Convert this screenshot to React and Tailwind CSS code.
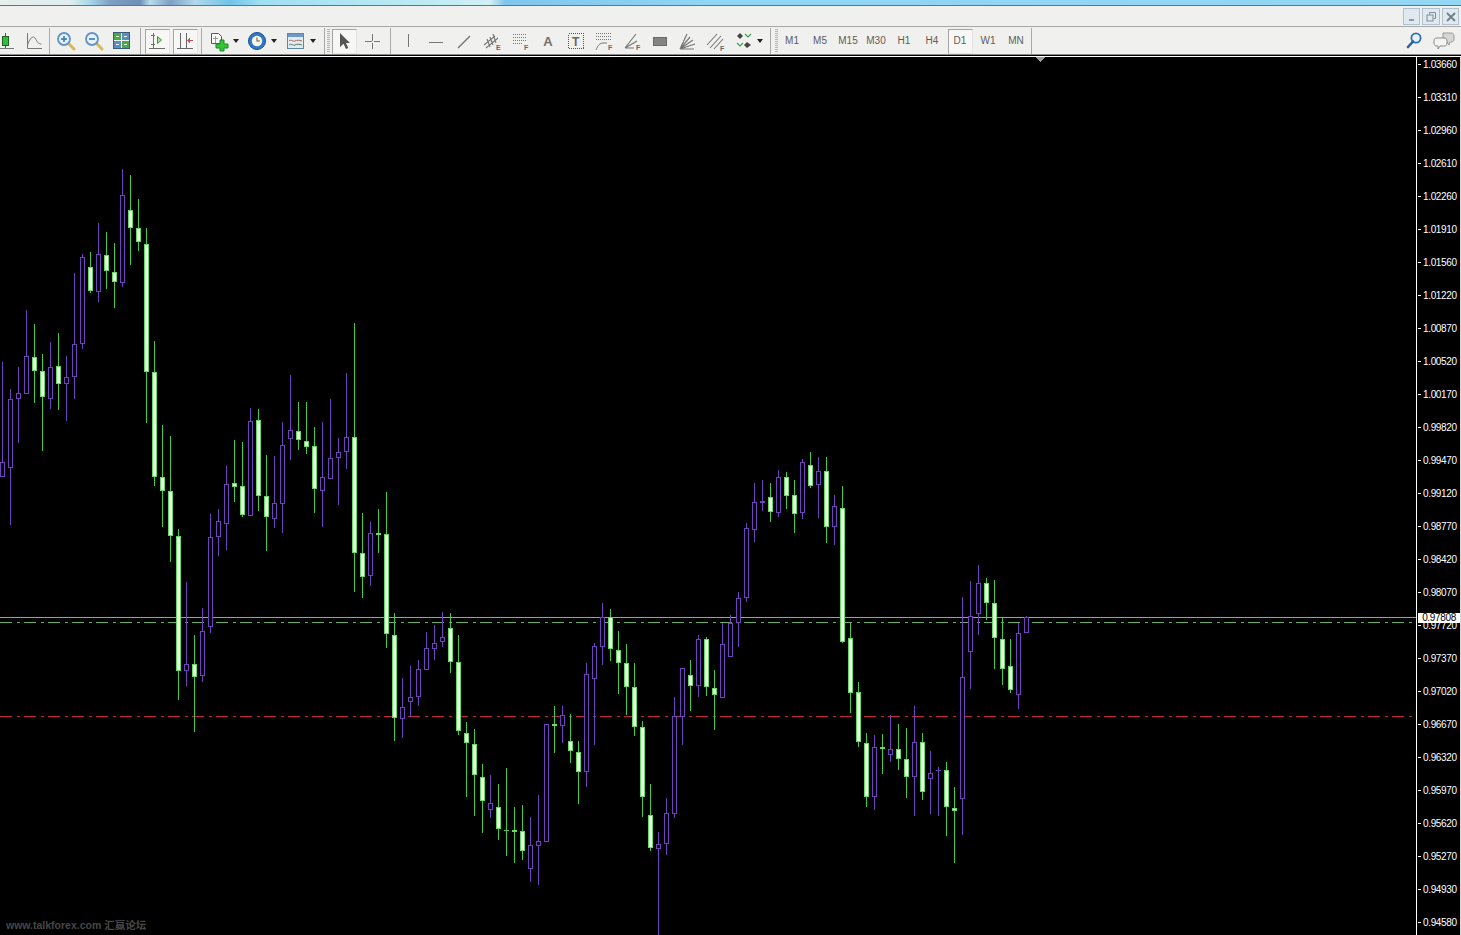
import React from "react";

const D = `P,362,462,477,477;P,389,399,468,525;P,367,393,399,443;P,310,356,394,394;G,324,357,371,403;G,354,371,397,451;P,342,367,399,409;G,333,366,384,410;P,356,377,384,421;P,273,344,377,399;P,254,257,344,349;G,252,267,291,293;P,223,254,292,302;G,232,255,271,289;G,243,272,282,308;P,169,195,283,287;G,175,210,228,265;G,199,228,242,251;G,228,244,372,423;G,341,372,477,486;G,425,477,491,527;G,436,491,536,562;G,529,536,671,700;P,582,664,671,686;G,635,664,677,732;P,608,631,676,682;P,514,537,627,633;P,509,521,537,556;P,466,484,524,550;G,440,483,487,502;G,442,486,515,517;P,408,421,516,516;G,409,420,496,511;G,455,496,517,551;P,456,503,519,528;P,422,445,504,533;P,375,430,439,460;G,402,431,440,450;G,402,441,447,454;G,427,446,489,513;P,422,477,491,527;P,399,458,479,479;P,438,452,458,505;P,373,437,452,469;G,323,437,553,592;G,513,553,577,598;P,522,533,576,586;G,509,533,535,553;G,492,534,634,648;G,613,635,718,741;P,678,707,719,738;P,666,697,702,717;P,660,669,697,706;P,632,648,670,670;P,625,643,649,660;P,612,637,642,647;G,613,628,662,673;G,635,662,731,735;G,722,733,743,797;G,729,744,775,816;G,764,777,801,833;P,775,803,810,818;G,784,807,829,840;T,768,830,831,856;G,807,830,832,863;G,805,831,851,860;P,817,845,869,882;P,795,841,846,885;P,724,724,842,842;G,706,724,726,753;P,706,715,726,743;G,714,741,751,763;G,741,752,772,804;P,663,674,772,787;P,643,646,679,745;P,603,617,647,665;G,609,617,649,661;G,631,650,663,694;G,644,663,687,715;G,663,687,727,736;G,721,727,797,817;G,784,815,848,851;P,832,844,849,935;P,798,813,844,855;P,697,716,814,818;P,668,668,717,745;G,660,675,686,711;P,635,639,686,697;G,637,639,687,696;G,670,688,695,730;P,623,644,698,698;P,615,623,657,657;P,592,598,623,647;P,523,528,598,602;P,483,502,530,542;P,480,501,503,511;G,483,497,512,522;P,470,477,513,517;G,472,477,496,509;G,480,495,514,533;P,459,462,513,519;G,452,465,486,488;P,457,471,485,518;G,457,471,527,543;P,495,506,527,545;G,486,508,642,643;G,623,638,693,713;G,682,692,742,747;G,733,743,797,807;P,735,747,797,810;G,734,747,749,774;P,715,749,755,762;G,724,749,759,770;G,728,759,777,798;P,706,742,777,816;G,733,742,792,800;P,751,773,779,814;Q,767,769,771,816;G,762,770,807,836;G,787,808,811,863;P,597,677,799,835;P,581,616,652,689;P,565,583,614,635;G,578,583,603,620;G,580,603,638,669;G,618,639,669,685;G,639,666,690,693;P,623,633,695,709;P,616,617,633,633`
  .split(";")
  .map((r) => r.split(","));

const LABELS = ["1.03660","1.03310","1.02960","1.02610","1.02260","1.01910","1.01560","1.01220","1.00870","1.00520","1.00170","0.99820","0.99470","0.99120","0.98770","0.98420","0.98070","0.97720","0.97370","0.97020","0.96670","0.96320","0.95970","0.95620","0.95270","0.94930","0.94580"];

const PURPLE = "#7040bd";
const GREEN = "#45c945";

function Candle({ row, i }) {
  const [t, h, a, b, l] = row;
  const high = +h, top = +a, bot = +b, low = +l;
  const x = 2 + i * 8;
  const purple = t === "P" || t === "Q";
  const color = purple ? PURPLE : GREEN;
  const wick = <rect x={x} y={high} width="1" height={low - high} fill={color} />;
  if (t === "T") {
    return <g>{wick}<rect x={x - 2} y={top} width="5" height="1" fill={color} /></g>;
  }
  if (t === "Q") {
    return <g>{wick}<rect x={x - 2} y={top + 1} width="5" height="1" fill={color} /></g>;
  }
  return (
    <g>
      {wick}
      <rect x={x - 2} y={top} width="5" height={Math.max(bot - top, 2)} fill={purple ? PURPLE : "#62dd62"} />
      {bot - top > 2 && (
        <rect x={x - 1} y={top + 1} width="3" height={bot - top - 2} fill={purple ? "#000000" : "#eaffe2"} />
      )}
    </g>
  );
}

function Chart() {
  return (
    <div className="relative flex-1 min-w-0 bg-black overflow-hidden">
      <svg viewBox="0 57 1416 878" className="block w-[1416px] h-[878px]" shapeRendering="crispEdges">
        <rect x="0" y="617" width="1416" height="1" fill="#9d9ab8" />
        <line x1="0" x2="1416" y1="622.5" y2="622.5" stroke="#62b062" strokeDasharray="12 5 3 4" />
        <line x1="0" x2="1416" y1="716.5" y2="716.5" stroke="#c4263a" strokeDasharray="12 5 3 4" />
        {D.map((r, i) => <Candle key={i} row={r} i={i} />)}
        <polygon points="1035,57 1045,57 1040,62" fill="#9a9a9a" />
      </svg>
      <div className="absolute left-[6px] bottom-[3px] text-[10.5px] font-bold leading-[14px] text-[#474747] whitespace-nowrap font-['Liberation_Sans','Noto_Sans_CJK_SC',sans-serif]">
        www.talkforex.com 汇赢论坛
      </div>
    </div>
  );
}

function Axis() {
  return (
    <div className="relative w-[45px] h-[878px] border-l border-r border-l-white border-r-[#d8d8d8] bg-black overflow-hidden">
      <div className="-mt-[9px] flex flex-col">
        {LABELS.map((s) => (
          <div key={s} className="h-[33px] shrink-0 flex items-center gap-[2px] pl-px">
            <span className="block w-[3px] h-px bg-white" />
            <span className="text-[10px] tracking-[-0.35px] leading-none text-white font-['Liberation_Sans',sans-serif]">{s}</span>
          </div>
        ))}
      </div>
      <div className="absolute left-px top-[556px] w-[42px] h-[10px] bg-white flex items-center justify-center text-[10px] tracking-[-0.35px] leading-none text-black font-['Liberation_Sans',sans-serif]">
        0.97808
      </div>
    </div>
  );
}

const S = ({ children }) => (
  <svg width="22" height="22" viewBox="0 0 22 22" fill="none" className="block">{children}</svg>
);
const Btn = ({ children, pressed, className = "w-7" }) => (
  <div className={`${className} h-[26px] shrink-0 flex items-center justify-center`}>
    {pressed ? (
      <div className="w-[25px] h-[25px] flex items-center justify-center border border-t-[#a4a4a4] border-l-[#a4a4a4] border-r-[#e4e4e4] border-b-[#e4e4e4] bg-[#f7f7f6]">
        {children}
      </div>
    ) : children}
  </div>
);
const Sep = ({ className = "" }) => <div className={`w-px h-[26px] shrink-0 bg-[#a8a8a8] ${className}`} />;
const Grip = ({ className = "" }) => (
  <div className={`w-[3px] h-[23px] mb-[2px] shrink-0 flex flex-col justify-between ${className}`}>
    {Array.from({ length: 12 }).map((_, i) => <span key={i} className="block h-px bg-[#b4b4b4]" />)}
  </div>
);
const Caret = ({ className }) => (
  <div className={`${className} h-[26px] shrink-0 flex items-center justify-center`}>
    <span className="block shrink-0 border-t-[4px] border-x-[3.5px] border-t-[#222] border-x-transparent" />
  </div>
);
const G = "#777777";
const Letter = ({ c, x = 15, y = 20 }) => (
  <text x={x} y={y} fontSize="7" fontWeight="700" fill="#666" fontFamily="Liberation Sans, sans-serif">{c}</text>
);
const Tf = ({ t, pressed }) => (
  <Btn pressed={pressed}>
    <span className="text-[10px] leading-none text-[#5c5c5c] font-['Liberation_Sans',sans-serif]">{t}</span>
  </Btn>
);

const Magnifier = ({ plus }) => (
  <S>
    <line x1="13" y1="13" x2="19" y2="19" stroke="#d9b75a" strokeWidth="3" strokeLinecap="round" />
    <circle cx="9" cy="9" r="6" fill="#e6f1fa" stroke="#5f94c6" strokeWidth="1.8" />
    <rect x="6" y="8.2" width="6" height="1.6" fill="#3c79b4" />
    {plus && <rect x="8.2" y="6" width="1.6" height="6" fill="#3c79b4" />}
  </S>
);

function Toolbar() {
  return (
    <div className="h-[27px] bg-[#f0f0ee] border-b border-[#8c8c8c] flex items-end overflow-hidden font-['Liberation_Sans',sans-serif] box-content">
      <Btn className="w-[29px] -ml-[10px]">
        <S>
          <path d="M4.5 2v16.5H20" stroke={G} />
          <path d="M11.5 3v15" stroke="#2b6b2b" />
          <rect x="8.5" y="6.5" width="6" height="9" fill="#2fbf3a" stroke="#1f5f24" />
        </S>
      </Btn>
      <Btn>
        <S>
          <path d="M5.5 3v15.5H20" stroke={G} />
          <path d="M5.5 15c2-6 4-8 6-8s3 5 5 6 2 1 3 1" stroke={G} />
        </S>
      </Btn>
      <Sep className="ml-[2px] mr-[2px]" />
      <Btn><Magnifier plus /></Btn>
      <Btn><Magnifier /></Btn>
      <Btn>
        <S>
          <rect x="2.5" y="2.5" width="16" height="16" fill="#eef4f8" stroke="#3a5a7a" />
          <rect x="3" y="3" width="7" height="7" fill="#47a947" />
          <rect x="11" y="3" width="7" height="7" fill="#5b8fc4" />
          <rect x="3" y="11" width="7" height="7" fill="#5b8fc4" />
          <rect x="11" y="11" width="7" height="7" fill="#47a947" />
          <rect x="5" y="6" width="3" height="1" fill="#fff" />
          <rect x="13" y="6" width="3" height="1" fill="#fff" />
          <rect x="5" y="14" width="3" height="1" fill="#fff" />
          <rect x="13" y="14" width="3" height="1" fill="#fff" />
        </S>
      </Btn>
      <Sep className="ml-[4px] mr-[2px]" />
      <Btn pressed>
        <S>
          <path d="M7.5 3v15M3 18.5h16" stroke="#6a6f6a" />
          <path d="M5 5.5h4M5 14.5h4" stroke="#6a6f6a" />
          <path d="M11.5 6.5l4 3.5-4 3.5z" fill="#a8dc9c" stroke="#3f9a3f" />
        </S>
      </Btn>
      <Btn pressed>
        <S>
          <path d="M6.5 3v15M12.5 3v15M3 18.5h16" stroke="#666" />
          <path d="M19 10.5h-5" stroke="#c44f4f" />
          <path d="M13 10.5l3-3v6z" fill="#c44f4f" />
        </S>
      </Btn>
      <Sep className="ml-[2px] mr-[3px]" />
      <Btn>
        <S>
          <path d="M3.5 3.5h7l3 3v7h-10z" fill="#fafafa" stroke="#5a5a5a" />
          <path d="M7.5 6v7M5 8.5h5" stroke="#9a9a9a" />
          <path d="M12 10h4v4h4v4h-4v3h-4v-3H8v-4h4z" fill="#35c435" stroke="#1f8a2a" />
        </S>
      </Btn>
      <Caret className="w-[5px]" />
      <div className="w-[5px] shrink-0" />
      <Btn>
        <S>
          <circle cx="11" cy="11" r="8.5" fill="#2f79c8" stroke="#1c4f8f" />
          <circle cx="11" cy="11" r="5.2" fill="#f7f4e8" />
          <path d="M11 7.5V11h3" stroke="#7a5a2a" strokeWidth="1.1" />
        </S>
      </Btn>
      <Caret className="w-[6px]" />
      <div className="w-[5px] shrink-0" />
      <Btn>
        <S>
          <rect x="2.5" y="3.5" width="16" height="15" fill="#dfeaf2" stroke="#5f86a8" />
          <rect x="3" y="4" width="15" height="3" fill="#6d9ac4" />
          <path d="M4 11c2-2 4 1 6 0s4-1 7 0" stroke="#a86a55" />
          <path d="M4 15c2-2 4 1 6 0s4-1 7 0" stroke="#5a7a5a" />
        </S>
      </Btn>
      <Caret className="w-[6px]" />
      <Sep className="ml-[8px]" />
      <Grip className="ml-[2px]" />
      <Btn pressed>
        <S>
          <path d="M7 3v14l3.5-3.2L13 19l2.4-1.1-2.5-5H17z" fill="#555" />
        </S>
      </Btn>
      <Btn>
        <S>
          <path d="M11.5 4v7M11.5 13v6M4 11.5h6.5M12.5 11.5H19" stroke="#777" shapeRendering="crispEdges" />
        </S>
      </Btn>
      <Sep className="ml-[4px] mr-[3px]" />
      <Btn><S><path d="M11.5 4v13" stroke={G} shapeRendering="crispEdges" /></S></Btn>
      <Btn><S><path d="M4 12.5h14" stroke={G} shapeRendering="crispEdges" /></S></Btn>
      <Btn><S><path d="M5 18L17 6" stroke={G} strokeWidth="1.4" /></S></Btn>
      <Btn>
        <S>
          <path d="M3 15L14 6M5 18L17 8M6 9l3 8M9 7l3 8M12 4l3 9" stroke={G} strokeWidth="1.1" />
          <Letter c="E" />
        </S>
      </Btn>
      <Btn>
        <S>
          <path d="M4 4.5h14M4 7.5h14M4 10.5h14M4 13.5h10" stroke={G} strokeDasharray="1 1" shapeRendering="crispEdges" />
          <Letter c="F" />
        </S>
      </Btn>
      <Btn>
        <span className="text-[13px] leading-none text-[#707070] font-bold">A</span>
      </Btn>
      <Btn>
        <S>
          <rect x="3.5" y="3.5" width="15" height="15" stroke="#555" strokeDasharray="1 1" shapeRendering="crispEdges" />
          <text x="7" y="16" fontSize="12" fontWeight="700" fill="#666" fontFamily="Liberation Sans, sans-serif">T</text>
        </S>
      </Btn>
      <Btn>
        <S>
          <path d="M3 3.5h16M3 6.5h16M3 9.5h16" stroke={G} strokeDasharray="1 1" shapeRendering="crispEdges" />
          <path d="M3 20c2-5 4-7 7-7h4" stroke={G} />
          <Letter c="F" />
        </S>
      </Btn>
      <Btn>
        <S>
          <path d="M4 18L15 4M4 18l12-7M4 18h9" stroke={G} strokeWidth="1.2" />
          <Letter c="F" />
        </S>
      </Btn>
      <Btn>
        <S><rect x="4.5" y="7.5" width="13" height="8" fill="#848484" stroke="#6a6a6a" /></S>
      </Btn>
      <Btn>
        <S><path d="M3 19L10 4M3 19l10-12M3 19l13-9M3 19l15-5M3 19h14" stroke={G} strokeWidth="1.2" /></S>
      </Btn>
      <Btn>
        <S>
          <path d="M2 15L12 4M5 18L16 6M9 19L18 9" stroke={G} strokeWidth="1.1" />
          <Letter c="F" x="15" y="21" />
        </S>
      </Btn>
      <Btn>
        <S>
          <path d="M7 3l3 3-3 3-3-3z" fill="#444" />
          <path d="M14 12l4 3-4 3-3-3z" fill="#444" />
          <path d="M4 13l3 3 3-3M12 4l3 3 3-3" stroke="#3aa04a" strokeWidth="1.2" />
        </S>
      </Btn>
      <Caret className="w-[6px] ml-[-1px] mr-px" />
      <Sep className="ml-[6px]" />
      <Grip className="ml-[4px]" />
      <Tf t="M1" />
      <Tf t="M5" />
      <Tf t="M15" />
      <Tf t="M30" />
      <Tf t="H1" />
      <Tf t="H4" />
      <Tf t="D1" pressed />
      <Tf t="W1" />
      <Tf t="MN" />
      <Sep className="ml-px" />
      <div className="ml-auto flex items-center gap-[2px] pr-[3px]">
        <Btn>
          <S>
            <circle cx="13" cy="8" r="4.6" fill="#e8f2fb" stroke="#2f6fb4" strokeWidth="1.8" />
            <path d="M10 11.5L5 17" stroke="#2a5f9f" strokeWidth="2.6" strokeLinecap="round" />
          </S>
        </Btn>
        <Btn>
          <S>
            <path d="M10 3h8c2 0 3 1 3 3v3c0 2-1 3-3 3h-1l-1 3-2-3h-4z" fill="#d6d6d6" stroke="#9a9a9a" />
            <path d="M4 8h7c2 0 3 1 3 3v2c0 2-1 3-3 3H7l-2 3v-3H4c-2 0-3-1-3-3v-2c0-2 1-3 3-3z" fill="#f4f4f4" stroke="#8a8a8a" />
          </S>
        </Btn>
      </div>
    </div>
  );
}

const WinBtn = ({ children, className = "w-[17px]" }) => (
  <div className={`${className} h-[17px] flex items-center justify-center bg-[#dfe9ef] border border-[#aec1cc]`}>
    {children}
  </div>
);

export default function App() {
  return (
    <div className="w-[1461px] h-[935px] overflow-hidden flex flex-col bg-black">
      <div className="h-[6px] shrink-0 border-b border-[#557a8c] bg-[linear-gradient(90deg,#e6efec_0px,#dfeeee_70px,#a5d8e8_90px,#7f9fc2_110px,#6f8fb8_140px,#b9dcea_150px,#7f9fc4_170px,#b0d8ea_195px,#6fc4ea_230px,#9fdff2_260px,#c0ecf4_440px,#d2eff4_490px,#7fc6ee_505px,#8fd5f4_700px,#93d7f4_1461px)]" />
      <div className="h-[20px] shrink-0 bg-[#f0f0ee] flex items-start justify-end gap-[2px] pr-[2px] pt-[2px]">
        <WinBtn>
          <span className="block w-[5px] h-[2px] mt-[6px] bg-[#8b9ba6]" />
        </WinBtn>
        <WinBtn className="w-[18px]">
          <svg width="10" height="10" viewBox="0 0 10 10" fill="none">
            <path d="M3.5 2.5V.5h6v6h-2" stroke="#7f8f9a" />
            <rect x="1" y="3" width="6" height="6" stroke="#7f8f9a" />
          </svg>
        </WinBtn>
        <WinBtn>
          <svg width="10" height="10" viewBox="0 0 10 10" fill="none">
            <path d="M1 1l8 8M9 1L1 9" stroke="#6f7f8a" strokeWidth="1.8" />
          </svg>
        </WinBtn>
      </div>
      <div className="h-px shrink-0 bg-[#a8a8a8]" />
      <Toolbar />
      <div className="h-px shrink-0 bg-black" />
      <div className="h-px shrink-0 bg-white" />
      <div className="flex flex-1 min-h-0">
        <Chart />
        <Axis />
      </div>
    </div>
  );
}
